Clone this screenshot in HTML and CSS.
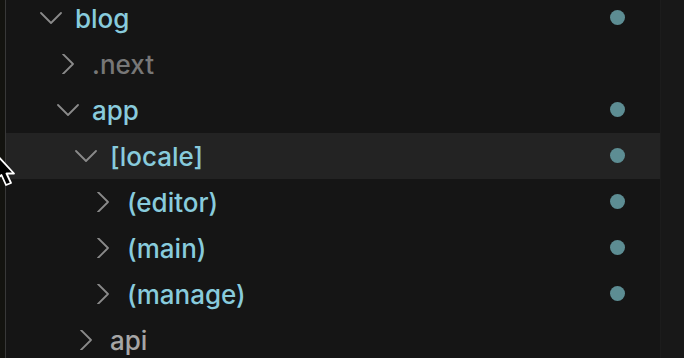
FILE: index.html
```html
<!DOCTYPE html>
<html>
<head>
<meta charset="utf-8">
<link rel="stylesheet" href="styles.css">
</head>
<body>
<div class="screen">
  <div class="edge"></div>
  <div class="panel">
    <div class="tree">
      <div class="row lv0 teal"><svg class="chev" viewBox="0 0 22 20"><path d="M1 5 L11 15 L21 5"/></svg><span class="name">blog</span><span class="dot"></span></div>
      <div class="row lv1 dim"><svg class="chev" viewBox="0 0 22 20"><path d="M6 0 L16 10 L6 20"/></svg><span class="name">.next</span></div>
      <div class="row lv1 teal"><svg class="chev" viewBox="0 0 22 20"><path d="M1 5 L11 15 L21 5"/></svg><span class="name">app</span><span class="dot"></span></div>
      <div class="row lv2 teal active"><svg class="chev" viewBox="0 0 22 20"><path d="M1 5 L11 15 L21 5"/></svg><span class="name">[locale]</span><span class="dot"></span></div>
      <div class="row lv3 teal"><svg class="chev" viewBox="0 0 22 20"><path d="M6 0 L16 10 L6 20"/></svg><span class="name">(editor)</span><span class="dot"></span></div>
      <div class="row lv3 teal"><svg class="chev" viewBox="0 0 22 20"><path d="M6 0 L16 10 L6 20"/></svg><span class="name">(main)</span><span class="dot"></span></div>
      <div class="row lv3 teal"><svg class="chev" viewBox="0 0 22 20"><path d="M6 0 L16 10 L6 20"/></svg><span class="name">(manage)</span><span class="dot"></span></div>
      <div class="row lv2 gray"><svg class="chev" viewBox="0 0 22 20"><path d="M6 0 L16 10 L6 20"/></svg><span class="name">api</span></div>
    </div>
  </div>
  <div class="rail"></div>
  <svg class="cursor" viewBox="0 0 20 32" width="20" height="32"><path d="M-4 -4 L-4 22 L1.5 17 L6 27 L11 25 L6.5 15.5 L14 15.5 Z"/></svg>
</div>
</body>
</html>
```
FILE: styles.css
```css
html, body {
  margin: 0;
  padding: 0;
  background: #151515;
}
.screen {
  position: relative;
  width: 684px;
  height: 358px;
  overflow: hidden;
  display: flex;
  background: #151515;
  font-family: Inter, "Liberation Sans", sans-serif;
}
.edge {
  width: 5px;
  flex: none;
  background: #13130f;
  border-right: 1px solid #383838;
}
.panel {
  width: 654px;
  flex: none;
  background: #151515;
  border-right: 1px solid #1c1c1c;
}
.rail {
  flex: 1;
  background: #181818;
}
.tree {
  margin-top: -5px;
}
.row {
  height: 46px;
  display: flex;
  align-items: center;
  font-size: 26px;
  font-weight: 500;
}
.row.active {
  background: #232323;
}
.lv0 { padding-left: 34px; }
.lv1 { padding-left: 51px; }
.lv2 { padding-left: 69px; }
.lv3 { padding-left: 86px; }
.chev {
  width: 22px;
  height: 20px;
  flex: none;
  margin-right: 13px;
  fill: none;
  stroke: #8a8a8a;
  stroke-width: 1.8;
  stroke-linecap: round;
  stroke-linejoin: round;
}
.name {
  flex: 1;
  line-height: 46px;
  padding-top: 1px;
}
.teal .name { color: #88cbdc; }
.dim .name { color: #777777; }
.gray .name { color: #a6a6a6; }
.dot {
  width: 15px;
  height: 15px;
  border-radius: 50%;
  background: #5d8d93;
  margin-right: 35px;
  margin-bottom: 2px;
  flex: none;
}
.cursor {
  position: absolute;
  left: 0;
  top: 158px;
  fill: #000;
  stroke: #fff;
  stroke-width: 1.8;
  stroke-linejoin: round;
  overflow: visible;
}
```
